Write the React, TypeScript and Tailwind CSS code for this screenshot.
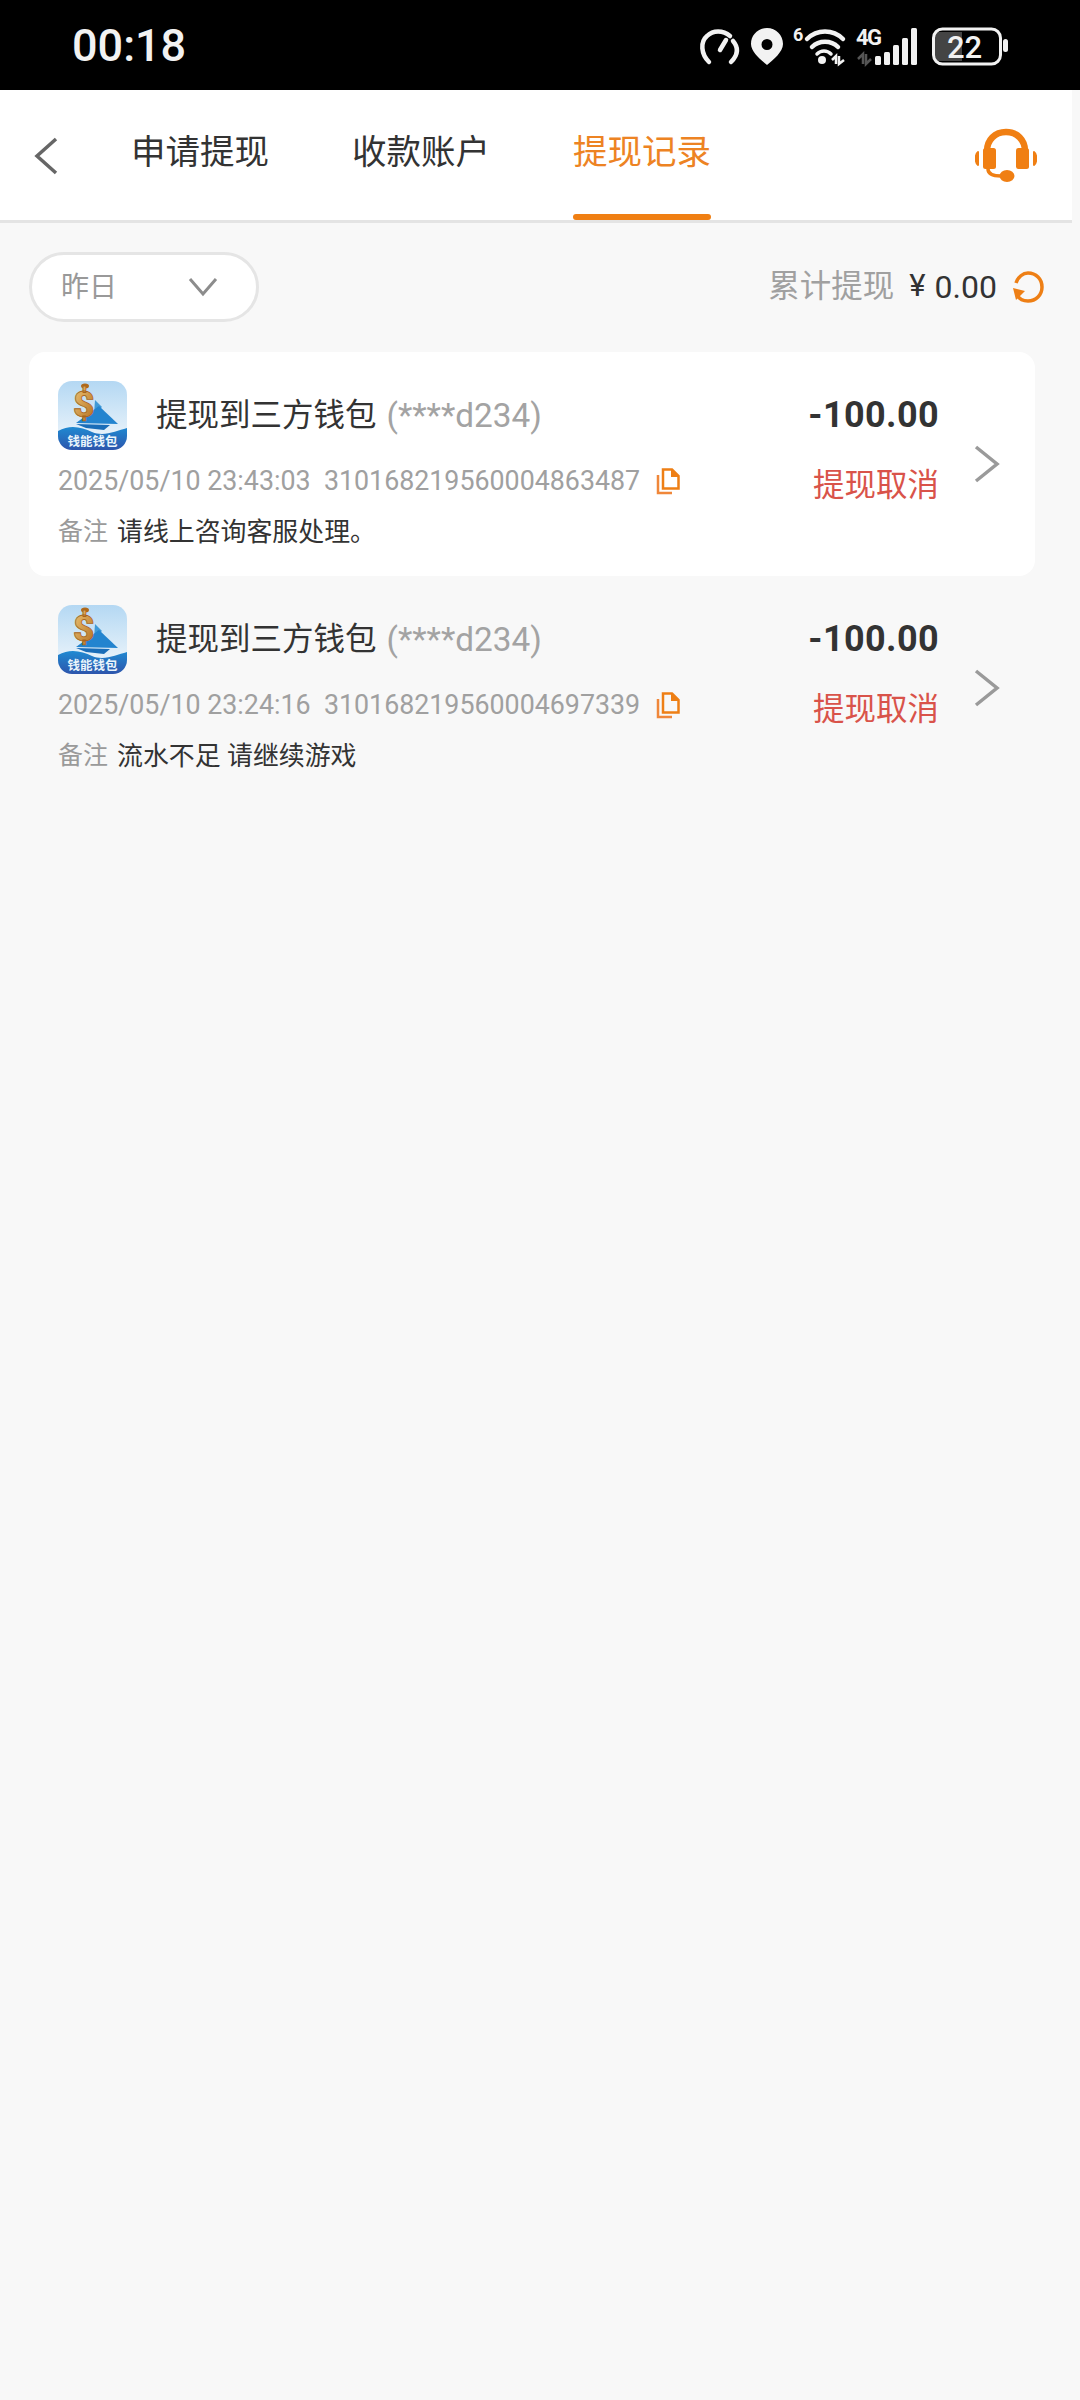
const sans = "font-['Roboto','Noto_Sans_CJK_SC',sans-serif]"

function StatusIcons() {
  return (
    <svg width="320" height="48" viewBox="0 -8 320 48" className="block text-[#f2f2f2]" fill="none">
      {/* gauge */}
      <path d="M10 35 C2 27 1 15 8 9 C14 3 24 3 31 9 M34 14 C40 21 39 28 32 35" stroke="currentColor" strokeWidth="4.5" strokeLinecap="round" />
      <path d="M21 23 L27 13" stroke="currentColor" strokeWidth="4.5" strokeLinecap="round" />
      {/* pin */}
      <path fillRule="evenodd" clipRule="evenodd" d="M68 1 C59 1 52 8 52 17 C52 25 62 33 68 38 C74 33 84 25 84 17 C84 8 77 1 68 1 Z M68 12 A5.5 5.5 0 1 0 68 23 A5.5 5.5 0 1 0 68 12 Z" fill="currentColor" />
      {/* 6 */}
      <text x="94" y="14" fontFamily="Roboto, sans-serif" fontWeight="700" fontSize="18" fill="currentColor">6</text>
      {/* wifi */}
      <path d="M108 12 C118 2 134 2 144 12" stroke="currentColor" strokeWidth="4.5" strokeLinecap="round" />
      <path d="M113 20 C120 13 132 13 139 20" stroke="currentColor" strokeWidth="4.5" strokeLinecap="round" />
      <path d="M118 27 C122 23 128 23 132 27" stroke="currentColor" strokeWidth="3.5" strokeLinecap="round" />
      <circle cx="123" cy="33" r="4" fill="currentColor" />
      <path d="M137 37 V29 L133 33 M140 29 V37 L145 33" stroke="currentColor" strokeWidth="2.5" />
      {/* 4G */}
      <text x="157" y="18" fontFamily="Roboto, sans-serif" fontWeight="700" fontSize="22" fill="currentColor" textLength="26">4G</text>
      <path d="M164 37 V27 L159 32 M167 27 V37 L172 32" stroke="#555" strokeWidth="2.5" />
      {/* signal */}
      <rect x="176" y="29" width="6" height="9" rx="1.5" fill="currentColor" />
      <rect x="185" y="25" width="6" height="13" rx="1.5" fill="currentColor" />
      <rect x="194" y="18" width="6" height="20" rx="1.5" fill="currentColor" />
      <rect x="203" y="11" width="6" height="27" rx="1.5" fill="currentColor" />
      <rect x="212" y="1" width="6" height="37" rx="1.5" fill="currentColor" />
      {/* battery */}
      <path d="M240 5 H263 V34 H240 A4 4 0 0 1 236 30 V9 A4 4 0 0 1 240 5 Z" fill="#444" />
      <rect x="234.5" y="2" width="67" height="35" rx="9" stroke="currentColor" strokeWidth="3" />
      <text x="248" y="31" fontFamily="Roboto, sans-serif" fontWeight="500" fontSize="31" fill="currentColor" textLength="35">22</text>
      <rect x="304" y="12" width="5" height="13" rx="2.5" fill="currentColor" />
    </svg>
  )
}

function Headset() {
  return (
    <svg width="62" height="55" viewBox="0 0 62 55" fill="none">
      <path d="M12 25 V23 C12 12 20 4 31 4 C42 4 50 12 50 23 V25" stroke="#f07f13" strokeWidth="6.5" />
      <rect x="8" y="20" width="13" height="21" rx="2.5" fill="#f07f13" />
      <rect x="41" y="20" width="13" height="21" rx="2.5" fill="#f07f13" />
      <path d="M3 24 C0 26 0 35 3 37 Z" fill="#f07f13" stroke="#f07f13" strokeWidth="2" strokeLinejoin="round" />
      <path d="M59 24 C62 26 62 35 59 37 Z" fill="#f07f13" stroke="#f07f13" strokeWidth="2" strokeLinejoin="round" />
      <path d="M13 41 C13 46 18 48 26 48" stroke="#f07f13" strokeWidth="3.5" />
      <ellipse cx="32" cy="48" rx="7.5" ry="6" fill="#f07f13" />
    </svg>
  )
}

function Logo({ id }: { id: string }) {
  return (
    <svg width="69" height="69" viewBox="0 0 69 69" className="block shrink-0">
      <defs>
        <linearGradient id={`sky${id}`} x1="0" y1="0" x2="0" y2="1">
          <stop offset="0" stopColor="#b4d8f3" />
          <stop offset="1" stopColor="#f5f9fc" />
        </linearGradient>
        <linearGradient id={`sea${id}`} x1="0" y1="0" x2="0" y2="1">
          <stop offset="0" stopColor="#1f8ad2" />
          <stop offset="1" stopColor="#2d55ac" />
        </linearGradient>
        <linearGradient id={`coin${id}`} x1="0" y1="0" x2="1" y2="1">
          <stop offset="0" stopColor="#f0c878" />
          <stop offset="1" stopColor="#b06a1c" />
        </linearGradient>
        <clipPath id={`clip${id}`}>
          <rect width="69" height="69" rx="14" />
        </clipPath>
      </defs>
      <g clipPath={`url(#clip${id})`}>
        <rect width="69" height="69" fill={`url(#sky${id})`} />
        <path d="M37 19 L44 26 L36 33 Z" fill="#3f9ad8" />
        <path d="M41 25 L60 43 L18 42 Z" fill="#2384cf" />
        <path d="M18 43 L52 44 L46 49 L28 47 Z" fill="#1a6db8" />
        <ellipse cx="27" cy="5" rx="4" ry="2.5" fill="#b06a1c" />
        <text x="15" y="36" fontFamily="Roboto, sans-serif" fontWeight="900" fontSize="37" fill={`url(#coin${id})`} stroke="#a8651c" strokeWidth="0.8" textLength="25">$</text>
        <path d="M0 50 C12 43 24 46 34 51 C46 56 58 50 69 47 V69 H0 Z" fill={`url(#sea${id})`} />
        <text x="34.5" y="65" textAnchor="middle" fontFamily="'Noto Sans CJK SC', sans-serif" fontWeight="700" fontSize="12.5" fill="#eaf4fb">钱能钱包</text>
      </g>
    </svg>
  )
}

function CopyIcon() {
  return (
    <svg width="24" height="27" viewBox="0 0 24 27" fill="none" className="block shrink-0">
      <path d="M2 7 V25 H16" stroke="#f0873a" strokeWidth="2.5" />
      <path d="M7 1.5 H16 L22.5 8 V20.5 H7 Z" stroke="#ee7f15" strokeWidth="2.5" fill="none" />
      <path d="M15 1 L23 9 H15 Z" fill="#ee7f15" />
    </svg>
  )
}

function Record({ id, raised, time, serial, note }: { id: string; raised?: boolean; time: string; serial: string; note: string }) {
  return (
    <div className={`mx-[29px] flex h-[224px] w-[1006px] items-center rounded-[16px] ${raised ? 'bg-white' : ''}`}>
      <div className="flex h-full flex-col pl-[29px] pt-[29px]">
        <div className="flex items-center">
          <Logo id={id} />
          <span className="ml-[29px] text-[31.5px] leading-[44px] text-[#333]">提现到三方钱包</span>
          <span className="ml-[10px] text-[33.3px] leading-[44px] text-[#a3a3a3]">(****d234)</span>
        </div>
        <div className="mt-[14px] flex h-[34px] items-center text-[26.8px] text-[#a0a0a0]">
          <span className="whitespace-pre">{time}  {serial}</span>
          <span className="ml-[16px]"><CopyIcon /></span>
        </div>
        <div className="mt-[17px] flex h-[34px] items-center text-[25px]">
          <span className="text-[#9a9a9a]">备注</span>
          <span className="ml-[9px] text-[25.9px] text-[#333]">{note}</span>
        </div>
      </div>
      <div className="ml-auto flex h-full flex-col items-end pt-[41px]">
        <div className="text-[36px] font-bold leading-[44px] tracking-[0.4px] text-[#333]">-100.00</div>
        <div className="mt-[27px] text-[31.5px] leading-[44px] text-[#d9534a]">提现取消</div>
      </div>
      <svg width="26" height="38" viewBox="0 0 26 38" fill="none" className="ml-[35px] mr-[35px] shrink-0">
        <path d="M2 2 L23 19 L2 36" stroke="#9a9a9a" strokeWidth="3.5" />
      </svg>
    </div>
  )
}

export default function App() {
  return (
    <div className={`flex h-[2400px] w-[1080px] flex-col overflow-hidden bg-[#f8f8f8] ${sans}`}>
      <div className="flex h-[90px] items-center bg-black pl-[72px] pr-[61px] pt-[1px]">
        <span className="text-[45px] font-medium leading-none text-[#f2f2f2]">00:18</span>
        <div className="ml-auto pb-[6px]"><StatusIcons /></div>
      </div>

      <div className="flex h-[130px] w-[1072px] items-start bg-white">
        <svg width="24" height="38" viewBox="0 0 24 38" fill="none" className="ml-[34px] mt-[47px] shrink-0">
          <path d="M22 2 L3 19 L22 36" stroke="#666" strokeWidth="3.5" />
        </svg>
        <div className="ml-[73px] flex gap-[83px] text-[34.5px] leading-[44px] text-[#333]">
          <span className="mt-[40px]">申请提现</span>
          <span className="mt-[40px]">收款账户</span>
          <div className="flex h-[130px] flex-col items-center text-[#ed8323]">
            <span className="mt-[40px]">提现记录</span>
            <div className="mt-auto h-[6px] w-[138px] rounded-full bg-[#f07f13]" />
          </div>
        </div>
        <div className="ml-auto mr-[35px] mt-[38px]"><Headset /></div>
      </div>
      <div className="h-[3px] w-[1072px] bg-[#e4e4e4]" />

      <div className="flex h-[129px] items-center pl-[29px] pr-[36px] pb-[7px] pt-[5px]">
        <div className="flex h-[70px] w-[230px] items-center rounded-full border-[3px] border-[#e5e5e5] bg-white pl-[29px]">
          <span className="mt-[2px] text-[28px] text-[#999]">昨日</span>
          <svg width="30" height="20" viewBox="0 0 30 20" fill="none" className="ml-[71px]">
            <path d="M2 2 L15 17 L28 2" stroke="#8c8c8c" strokeWidth="3" />
          </svg>
        </div>
        <span className="ml-auto text-[31.5px] text-[#a0a0a0]">累计提现</span>
        <span className="ml-[15px] text-[31px] text-[#333]">¥</span>
        <span className="ml-[9px] text-[32px] text-[#333]">0.00</span>
        <svg width="32" height="32" viewBox="0 0 32 32" fill="none" className="ml-[15px]">
          <path d="M4 12 C6 6 11 2 16 2 C24 2 30 8 30 16 C30 24 24 30 16 30 C11 30 7 28 5 24" stroke="#ee7f15" strokeWidth="3.5" />
          <path d="M1 17 L13 20 L4 29 Z" fill="#ee7f15" />
        </svg>
      </div>

      <Record id="a" raised time="2025/05/10 23:43:03" serial="310168219560004863487" note="请线上咨询客服处理。" />
      <Record id="b" time="2025/05/10 23:24:16" serial="310168219560004697339" note="流水不足 请继续游戏" />
    </div>
  )
}
